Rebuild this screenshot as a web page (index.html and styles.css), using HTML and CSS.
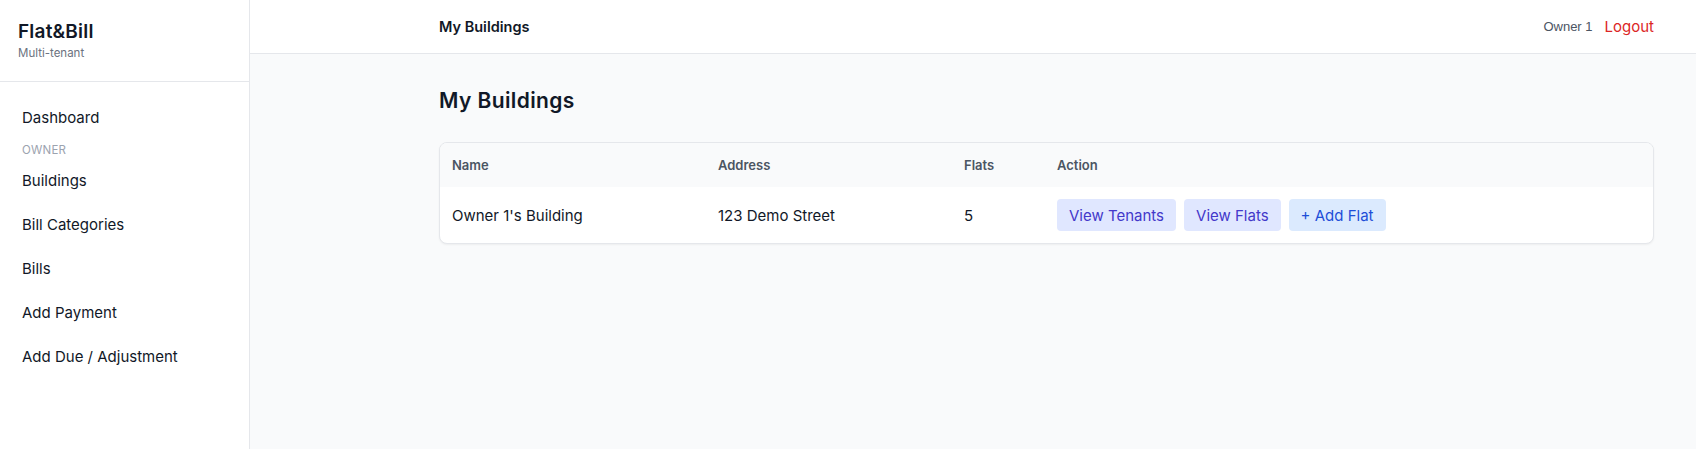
FILE: index.html
```html
<!DOCTYPE html>
<html lang="en">
<head>
<meta charset="utf-8">
<title>My Buildings</title>
<link rel="stylesheet" href="styles.css">
</head>
<body>
<div class="layout">
  <aside class="sidebar">
    <div class="brand">
      <div class="brand-name">Flat&amp;Bill</div>
      <div class="brand-sub">Multi-tenant</div>
    </div>
    <nav class="nav">
      <a class="nav-item">Dashboard</a>
      <div class="nav-label">OWNER</div>
      <a class="nav-item">Buildings</a>
      <a class="nav-item">Bill Categories</a>
      <a class="nav-item">Bills</a>
      <a class="nav-item">Add Payment</a>
      <a class="nav-item">Add Due / Adjustment</a>
    </nav>
  </aside>
  <div class="main">
    <header class="topbar">
      <div class="topbar-title">My Buildings</div>
      <div class="topbar-user">
        <span class="user-name">Owner 1</span>
        <a class="logout">Logout</a>
      </div>
    </header>
    <section class="content">
      <h1 class="page-title">My Buildings</h1>
      <div class="card">
        <table class="table">
          <thead>
            <tr>
              <th class="col-name">Name</th>
              <th class="col-address">Address</th>
              <th class="col-flats">Flats</th>
              <th>Action</th>
            </tr>
          </thead>
          <tbody>
            <tr>
              <td>Owner 1's Building</td>
              <td>123 Demo Street</td>
              <td>5</td>
              <td>
                <div class="actions">
                  <a class="btn btn-indigo">View Tenants</a>
                  <a class="btn btn-indigo">View Flats</a>
                  <a class="btn btn-blue">+ Add Flat</a>
                </div>
              </td>
            </tr>
          </tbody>
        </table>
      </div>
    </section>
  </div>
</div>
</body>
</html>
```
FILE: styles.css
```css
* { box-sizing: border-box; }
html, body {
  margin: 0;
  padding: 0;
  height: 100%;
}
body {
  font-family: Inter, "Noto Sans", Arial, sans-serif;
  color: #111827;
  background: #f9fafb;
}
a { text-decoration: none; color: inherit; cursor: pointer; }

.layout {
  display: flex;
  min-height: 449px;
}

.sidebar {
  width: 250px;
  flex: 0 0 250px;
  background: #ffffff;
  border-right: 1px solid #e5e7eb;
}
.brand {
  height: 82px;
  padding: 20px 18px 0;
  border-bottom: 1px solid #e5e7eb;
}
.brand-name {
  font-size: 19px;
  font-weight: 600;
  line-height: 24px;
  letter-spacing: 0.2px;
  color: #111827;
}
.brand-sub {
  font-size: 11.5px;
  line-height: 14px;
  margin-top: 2px;
  color: #6b7280;
}
.nav {
  display: flex;
  flex-direction: column;
  padding: 15px 0 0 22px;
}
.nav-item {
  display: block;
  font-size: 15px;
  line-height: 20px;
  padding: 11px 0 13px;
  color: #111827;
}
.nav-label {
  font-size: 11.5px;
  line-height: 14px;
  color: #9ca3af;
  letter-spacing: 0.2px;
  margin: 2px 0 3px;
}

.main {
  flex: 1;
  display: flex;
  flex-direction: column;
  min-width: 0;
}
.topbar {
  height: 54px;
  background: #ffffff;
  border-bottom: 1px solid #e5e7eb;
  display: flex;
  align-items: center;
  justify-content: space-between;
  padding: 0 42px 0 189px;
}
.topbar-title {
  font-size: 14.5px;
  font-weight: 600;
  color: #111827;
}
.topbar-user {
  display: flex;
  align-items: center;
  gap: 12px;
}
.user-name {
  font-family: "Liberation Sans", Arial, sans-serif;
  font-size: 13px;
  color: #4b5563;
}
.logout {
  font-size: 15px;
  color: #dc2626;
}

.content {
  padding: 33px 42px 0 189px;
}
.page-title {
  margin: 0 0 27px;
  font-size: 21px;
  line-height: 28px;
  font-weight: 600;
  letter-spacing: 0.4px;
  color: #111827;
}
.card {
  background: #ffffff;
  border: 1px solid #e5e7eb;
  border-radius: 8px;
  box-shadow: 0 1px 2px rgba(0, 0, 0, 0.05);
  overflow: hidden;
}
.table {
  width: 100%;
  border-collapse: collapse;
}
.table th {
  text-align: left;
  background: #f9fafb;
  font-size: 13px;
  font-weight: 600;
  color: #4b5563;
  height: 44px;
  padding: 0 12px;
}
.table td {
  font-size: 15px;
  color: #111827;
  height: 56px;
  padding: 0 12px;
}
.col-name { width: 266px; }
.col-address { width: 246px; }
.col-flats { width: 93px; }

.actions {
  display: flex;
  gap: 8px;
}
.btn {
  display: inline-flex;
  align-items: center;
  height: 32px;
  padding: 0 12px;
  border-radius: 4px;
  font-size: 15px;
}
.btn-indigo {
  background: #e0e7ff;
  color: #4338ca;
}
.btn-blue {
  background: #dbeafe;
  color: #1d4ed8;
}
```
